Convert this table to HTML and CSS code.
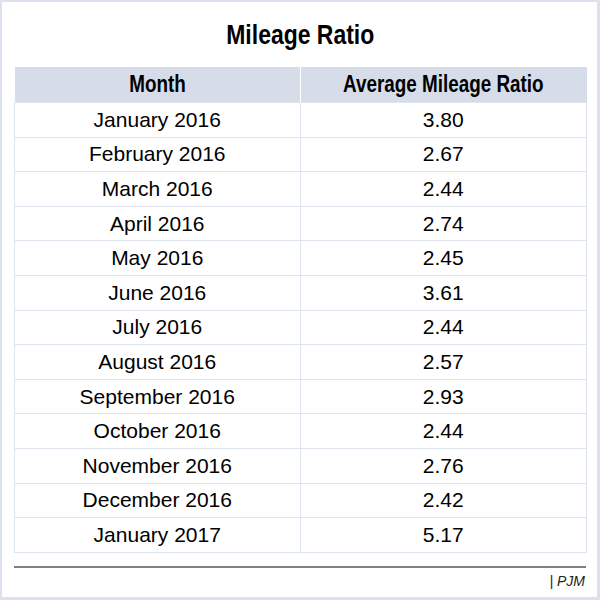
FILE: index.html
```html
<!DOCTYPE html>
<html>
<head>
<meta charset="utf-8">
<link rel="stylesheet" href="styles.css">
</head>
<body>
<div class="frame">
  <h1 class="title"><span class="narrow">Mileage Ratio</span></h1>
  <table class="grid">
    <thead>
      <tr><th><span class="narrow">Month</span></th><th><span class="narrow">Average Mileage Ratio</span></th></tr>
    </thead>
    <tbody>
      <tr><td>January 2016</td><td>3.80</td></tr>
      <tr><td>February 2016</td><td>2.67</td></tr>
      <tr><td>March 2016</td><td>2.44</td></tr>
      <tr><td>April 2016</td><td>2.74</td></tr>
      <tr><td>May 2016</td><td>2.45</td></tr>
      <tr><td>June 2016</td><td>3.61</td></tr>
      <tr><td>July 2016</td><td>2.44</td></tr>
      <tr><td>August 2016</td><td>2.57</td></tr>
      <tr><td>September 2016</td><td>2.93</td></tr>
      <tr><td>October 2016</td><td>2.44</td></tr>
      <tr><td>November 2016</td><td>2.76</td></tr>
      <tr><td>December 2016</td><td>2.42</td></tr>
      <tr><td>January 2017</td><td>5.17</td></tr>
    </tbody>
  </table>
  <div class="footer"><span class="source">| PJM</span></div>
</div>
</body>
</html>
```
FILE: styles.css
```css
html, body {
  margin: 0;
  padding: 0;
  background: #ffffff;
}
.frame {
  box-sizing: border-box;
  width: 600px;
  height: 600px;
  border: 2px solid #dbe2ed;
  border-right-width: 3px;
  border-bottom-width: 3px;
  padding: 0 11px 0 12px;
  font-family: "Liberation Sans", Arial, sans-serif;
  color: #000;
}
.narrow {
  display: inline-block;
  transform: scaleX(0.82);
  transform-origin: center;
  white-space: nowrap;
}
.title {
  margin: 0;
  height: 65px;
  line-height: 66px;
  font-size: 28px;
  font-weight: bold;
  text-align: center;
}
.grid {
  width: 573px;
  border-collapse: collapse;
  table-layout: fixed;
}
.grid th {
  background: #d6dde9;
  height: 35px;
  padding: 0;
  font-size: 23px;
  font-weight: bold;
  text-align: center;
  border-left: 1px solid #ffffff;
}
.grid th:first-child {
  border-left: none;
  width: 285px;
}
.grid td {
  height: 33.6px;
  padding: 0;
  font-size: 21px;
  text-align: center;
  border: 1px solid #dfe5ef;
}
.footer {
  margin-top: 13px;
  border-top: 2px solid #808080;
  height: 30px;
  text-align: right;
}
.source {
  display: inline-block;
  margin-top: 5px;
  margin-right: 1px;
  font-size: 14px;
  font-style: italic;
  color: #222;
}
```
